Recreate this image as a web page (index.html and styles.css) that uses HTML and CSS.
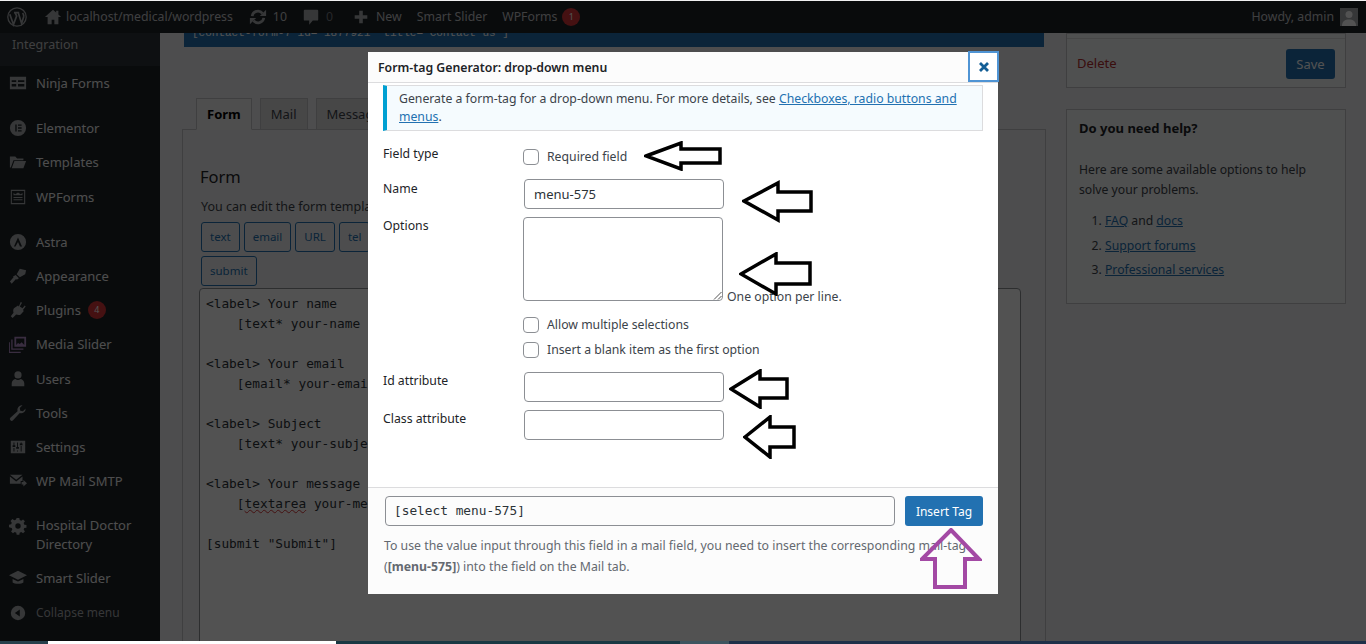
FILE: index.html
```html
<!DOCTYPE html>
<html lang="en">
<head>
  <meta charset="UTF-8">
  <title>Form-tag Generator</title>
  <link rel="stylesheet" href="styles.css">
</head>
<body>
  <div class="adminbar">
    <svg class="wp-logo" viewBox="0 0 20 20"><circle cx="10" cy="10" r="9.200" fill="none" stroke="#a7aaad" stroke-width="1.300"/><path d="M2.800 7.200L6.500 17.500 9.600 9 8 5.600M7 5.600h5.200M11.200 5.600L14.600 16.500l2-6.500c.5-1.800-.2-3-1-4" fill="none" stroke="#a7aaad" stroke-width="1.700"/></svg>
    <div class="bar-item home"><svg class="bar-icon" viewBox="0 0 20 20"><path d="M10 2L1 10h3v8h4.500v-5h3v5H16v-8h3l-3-2.700V3h-2.500v2z" fill="#a7aaad"/></svg>localhost/medical/wordpress</div>
    <div class="bar-item"><svg class="bar-icon" viewBox="0 0 20 20"><path d="M3.500 9A6.500 6.500 0 0 1 15 6" fill="none" stroke="#a7aaad" stroke-width="3"/><path d="M16.500 11A6.500 6.500 0 0 1 5 14" fill="none" stroke="#a7aaad" stroke-width="3"/><path d="M12 9l7 0 0-7zM8 11l-7 0 0 7z" fill="#a7aaad"/></svg>10</div>
    <div class="bar-item muted"><svg class="bar-icon" viewBox="0 0 20 20"><path d="M3 2h14a1 1 0 0 1 1 1v10a1 1 0 0 1-1 1h-5l-4 4.500V14H3a1 1 0 0 1-1-1V3a1 1 0 0 1 1-1z" fill="#a7aaad"/></svg>0</div>
    <div class="bar-item"><svg class="bar-icon" viewBox="0 0 20 20"><path d="M8 3h4v5h5v4h-5v5H8v-5H3V8h5z" fill="#a7aaad"/></svg>New</div>
    <div class="bar-item">Smart Slider</div>
    <div class="bar-item">WPForms<span class="bar-count">1</span></div>
    <div class="howdy">Howdy, admin<span class="avatar"><svg viewBox="0 0 18 18"><circle cx="9" cy="6.500" r="3.500" fill="#fff"/><path d="M2 18c0-5 3-6.500 7-6.500s7 1.500 7 6.500z" fill="#fff"/></svg></span></div>
  </div>

  <div class="wrap">
    <nav class="sidebar">
      <div class="menu-sub">Integration</div>
      <ul class="menu menu-ninja">
        <li><svg viewBox="0 0 20 20"><path d="M1 3h18v14H1zM3 7v2h5V7zm7 0v2h7V7zM3 11v3h5v-3zm7 0v3h7v-3z" fill="#a7aaad" fill-rule="evenodd"/></svg>Ninja Forms</li>
      </ul>
      <ul class="menu">
        <li><svg viewBox="0 0 20 20"><path d="M10 1a9 9 0 1 0 0 18 9 9 0 0 0 0-18zM7 6h1.500v8H7zm3 0h4v1.500h-4zm0 3.200h4v1.500h-4zm0 3.300h4V14h-4z" fill="#a7aaad" fill-rule="evenodd"/></svg>Elementor</li>
        <li><svg viewBox="0 0 20 20"><path d="M1 4h6l2 2h7v2H5l-3 8H1zM6 9h13l-3 8H3z" fill="#a7aaad"/></svg>Templates</li>
        <li><svg viewBox="0 0 20 20"><path d="M2 2h16v16H2zM3.200 3.200v13.600h13.600V3.200zM5 5.500l2 1.500 3-2 3 2 2-1.500V8H5zM5 10h10v1H5zm0 2.500h10v1H5z" fill="#a7aaad" fill-rule="evenodd"/></svg>WPForms</li>
      </ul>
      <ul class="menu">
        <li><svg viewBox="0 0 20 20"><path d="M10 1a9 9 0 1 0 0 18 9 9 0 0 0 0-18zM10 5l4.500 10h-2.300L10 10l-2.800 5H5.500z" fill="#a7aaad" fill-rule="evenodd"/></svg>Astra</li>
        <li><svg viewBox="0 0 20 20"><path d="M12 2l7 1.500L18 8l-6 3.500L8.500 8zM7.500 9l3.500 3.500-2 1.500-1.500-.5L3 18.500 1 16l4-4.500-.5-1z" fill="#a7aaad"/></svg>Appearance</li>
        <li><svg viewBox="0 0 20 20"><path d="M13 1l1.500 1-2.500 4 3 2 2.500-3L18.500 6l-3 4 1 1-3.500 4c-1.500 1-3.500.5-5 0L4 19l-2-2 3-4c-.5-2-.5-3.500.500-5l4.500-3 1 1z" fill="#a7aaad"/></svg>Plugins<span class="count">4</span></li>
        <li><svg viewBox="0 0 20 20"><path d="M6 2h13v11H6zM4 5v10h12v1.500H2.500V5zM1 8v10.500h12V20H0V8z" fill="#b08cc8" fill-rule="evenodd"/><path d="M8 4h9v7l-3-3-2 2-2-1-2 2z" fill="#1d2327"/></svg>Media Slider</li>
        <li><svg viewBox="0 0 20 20"><circle cx="10" cy="5.500" r="4" fill="#a7aaad"/><path d="M3 18v-3c0-3 2-4.500 4-5 2 1.500 4 1.500 6 0 2 .5 4 2 4 5v3z" fill="#a7aaad"/></svg>Users</li>
        <li><svg viewBox="0 0 20 20"><path d="M18.500 5a5 5 0 0 1-6.500 5l-7.500 8a2 2 0 0 1-3-2.800L9.500 8A5 5 0 0 1 15 1.500L12 4.500l.5 3 3 .5z" fill="#a7aaad"/></svg>Tools</li>
        <li><svg viewBox="0 0 20 20"><path d="M2 3h16v14H2zM5 5v3H4v2h3V8H6V5zm4 0v5H8v2h3v-2h-1V5zm4 0v1h-1v2h3V6h-1V5zM5 11v4h1v-4zm4 3v1h1v-1zm4-5v6h1V9z" fill="#a7aaad" fill-rule="evenodd"/></svg>Settings</li>
        <li><svg viewBox="0 0 20 20"><path d="M1 3h14l-7 5.500zM1 5l7 5.500L15 5v5h-2v3H1zM14 11h2V9l4 3.500-4 3.500v-2h-2z" fill="#a7aaad"/></svg>WP Mail SMTP</li>
      </ul>
      <ul class="menu">
        <li class="two-line"><svg viewBox="0 0 20 20"><path d="M8.500 1h3l.4 2.400 1.700.7 2-1.400 2.100 2.100-1.400 2 .7 1.700 2.400.4v3l-2.400.4-.7 1.700 1.400 2-2.100 2.100-2-1.400-1.700.7-.4 2.400h-3l-.4-2.400-1.700-.7-2 1.400-2.100-2.100 1.400-2-.7-1.700L0 11.500v-3l2.400-.4.7-1.700-1.400-2 2.100-2.100 2 1.400 1.700-.7zM10 7a3 3 0 1 0 0 6 3 3 0 0 0 0-6z" fill="#a7aaad" fill-rule="evenodd"/></svg>Hospital Doctor<br>Directory</li>
        <li><svg class="wide" viewBox="0 0 20 20"><path d="M10 2L0 7l10 5 10-5zM4 11l6 3 6-3v4c-2 2-10 2-12 0z" fill="#a7aaad"/></svg>Smart Slider</li>
        <li class="collapse"><svg viewBox="0 0 20 20"><path d="M10 2a8 8 0 1 0 0 16 8 8 0 0 0 0-16zm2 4v8L6.500 10z" fill="#a7aaad" fill-rule="evenodd"/></svg>Collapse menu</li>
      </ul>
    </nav>

    <main class="content">
      <div class="shortcode-bar">[contact-form-7 id="1877921" title="Contact us"]</div>
      <div class="columns">
        <div class="editor-col">
          <div class="tabs">
            <span class="tab active">Form</span>
            <span class="tab">Mail</span>
            <span class="tab">Messages</span>
            <span class="tab">Additional Settings</span>
          </div>
          <div class="tab-panel">
            <h2>Form</h2>
            <p class="tab-note">You can edit the form template here. For details, see Editing form template.</p>
            <div class="tag-buttons">
              <span class="tag-btn">text</span>
              <span class="tag-btn">email</span>
              <span class="tag-btn">URL</span>
              <span class="tag-btn">tel</span>
              <span class="tag-btn">number</span>
              <span class="tag-btn">date</span>
              <span class="tag-btn">text area</span>
              <span class="tag-btn">drop-down menu</span>
              <span class="tag-btn">checkboxes</span>
              <span class="tag-btn">radio buttons</span>
              <span class="tag-btn">acceptance</span>
              <span class="tag-btn break-btn">submit</span>
            </div>
            <pre class="form-code">&lt;label&gt; Your name
    [text* your-name autocomplete:name] &lt;/label&gt;

&lt;label&gt; Your email
    [email* your-email autocomplete:email] &lt;/label&gt;

&lt;label&gt; Subject
    [text* your-subject] &lt;/label&gt;

&lt;label&gt; Your message (optional)
    [<span class="squiggle">textarea</span> your-message] &lt;/label&gt;

[submit "Submit"]</pre>
          </div>
        </div>
        <aside class="side-col">
          <div class="side-box actions">
            <div class="actions-top"></div>
            <div class="actions-row">
              <span class="delete">Delete</span>
              <span class="save">Save</span>
            </div>
          </div>
          <div class="side-box help">
            <h3>Do you need help?</h3>
            <p>Here are some available options to help solve your problems.</p>
            <ol>
              <li><a>FAQ</a> and <a>docs</a></li>
              <li><a>Support forums</a></li>
              <li><a>Professional services</a></li>
            </ol>
          </div>
        </aside>
      </div>
    </main>
  </div>

  <div class="overlay"></div>

  <div class="foot-strip">
    <span class="strip s1"></span>
    <span class="strip s2"></span>
    <span class="strip s3"></span>
    <span class="strip s4"></span>
    <span class="strip s5"></span>
  </div>

  <div class="modal">
    <div class="modal-title">
      <span>Form-tag Generator: drop-down menu</span>
      <span class="modal-close"><svg viewBox="0 0 12 12"><path d="M2 2l8 8M10 2l-8 8" stroke="#135e96" stroke-width="2.800" fill="none"/></svg></span>
    </div>
    <div class="modal-body">
      <div class="notice">Generate a form-tag for a drop-down menu. For more details, see <a>Checkboxes, radio buttons and menus</a>.</div>
      <div class="row row-type">
        <div class="row-label">Field type</div>
        <label class="check"><span class="box"></span>Required field</label>
      </div>
      <div class="row row-name">
        <div class="row-label">Name</div>
        <div class="field">menu-575</div>
      </div>
      <div class="row row-options">
        <div class="row-label">Options</div>
        <div class="options-cell">
          <div class="options-line">
            <div class="area"><svg viewBox="0 0 9 9"><path d="M8.500 1L1 8.500M8.500 5L5 8.500" stroke="#555" fill="none"/></svg></div>
            <span class="hint">One option per line.</span>
          </div>
          <label class="check check-multi"><span class="box"></span>Allow multiple selections</label>
          <label class="check check-blank"><span class="box"></span>Insert a blank item as the first option</label>
        </div>
      </div>
      <div class="row row-id">
        <div class="row-label">Id attribute</div>
        <div class="field"></div>
      </div>
      <div class="row row-class">
        <div class="row-label">Class attribute</div>
        <div class="field"></div>
      </div>
    </div>
    <div class="modal-foot">
      <div class="tag-line">
        <div class="tag-output">[select menu-575]</div>
        <span class="insert">Insert Tag</span>
      </div>
      <p class="foot-note">To use the value input through this field in a mail field, you need to insert the corresponding mail-tag (<b>[menu-575]</b>) into the field on the Mail tab.</p>
    </div>
  </div>

  <!-- arrows someone drew on top of the screenshot -->
  <svg class="arrow a1" viewBox="0 0 78 30"><path d="M2 15L37 2v6h39v14H37v6z"/></svg>
  <svg class="arrow a2" viewBox="0 0 72 44"><path d="M2 21L36 3v9h33v19H36v9z"/></svg>
  <svg class="arrow a3" viewBox="0 0 73 44"><path d="M2 22L37 2v9h34v21H37v10z"/></svg>
  <svg class="arrow a4" viewBox="0 0 60 40"><path d="M2 20L31 2v8h27v19H31v9z"/></svg>
  <svg class="arrow a5" viewBox="0 0 53 44"><path d="M2 22L27 2v10h24v20H27v10z"/></svg>
  <svg class="arrow up" viewBox="0 0 62 62"><path d="M31 2l28 29H45v28H15V31H2z"/></svg>
</body>
</html>
```

FILE: styles.css
```css
body {
  margin: 0;
  height: 644px;
  overflow: hidden;
  position: relative;
  font-family: "Noto Sans", "Open Sans", sans-serif;
  font-size: 13px;
  line-height: 1.4;
  color: #3c434a;
  background: #f0f0f1;
}

a {
  color: #2271b1;
  text-decoration: underline;
}

/* admin bar */
.adminbar {
  height: 32px;
  margin-top: 1px;
  background: #1d2327;
  color: #c3c4c7;
  display: flex;
  align-items: center;
  font-size: 12.300px;
  padding-left: 7px;
}

.wp-logo {
  width: 20px;
  height: 20px;
  margin-right: 17px;
}

.bar-item {
  display: flex;
  align-items: center;
  margin-right: 15px;
}

.bar-icon {
  width: 18px;
  height: 18px;
  margin-right: 6px;
}

.bar-item.home {
  margin-right: 16px;
}

.home .bar-icon {
  margin-right: 4px;
}

.bar-item.muted {
  color: #787c82;
  margin-right: 19px;
}

.bar-count {
  display: inline-block;
  width: 18px;
  height: 18px;
  margin-left: 5px;
  border-radius: 50%;
  background: #d63638;
  color: #fff;
  font-size: 9px;
  line-height: 18px;
  text-align: center;
}

.howdy {
  margin-left: auto;
  display: flex;
  align-items: center;
  margin-right: 8px;
}

.avatar {
  width: 18px;
  height: 18px;
  margin-left: 6px;
  background: #a7aaad;
  display: block;
}

.avatar svg {
  display: block;
  width: 18px;
  height: 18px;
}

/* left menu */
.wrap {
  display: flex;
  height: 611px;
  overflow: hidden;
}

.sidebar {
  width: 160px;
  flex: none;
  background: #1d2327;
  color: #f0f0f1;
}

.menu-sub {
  height: 33px;
  line-height: 24px;
  padding-left: 12px;
  background: #2c3338;
  color: #c3c4c7;
  font-size: 12.500px;
}

.menu {
  list-style: none;
  margin: 0 0 11px;
  padding: 0;
}

.menu li {
  display: flex;
  align-items: center;
  position: relative;
  min-height: 34.200px;
  padding-left: 36px;
  box-sizing: border-box;
}

.menu svg {
  position: absolute;
  left: 9px;
  top: 8px;
  width: 18px;
  height: 18px;
}

.menu svg.wide {
  left: 7px;
  width: 22px;
}

.menu .two-line {
  min-height: 52px;
  line-height: 19px;
  display: block;
  padding-top: 7px;
}

.count {
  display: inline-block;
  width: 18px;
  height: 18px;
  margin-left: 7px;
  border-radius: 50%;
  background: #d63638;
  color: #fff;
  font-size: 9px;
  line-height: 18px;
  text-align: center;
}

.menu .collapse {
  color: #a7aaad;
  font-size: 12px;
  margin-top: 1px;
}

/* page behind the dialog */
.content {
  flex: 1;
  min-width: 0;
}

.shortcode-bar {
  width: 860px;
  margin-left: 24px;
  height: 14px;
  box-sizing: border-box;
  background: #2271b1;
  color: #fff;
  font-family: "Liberation Mono", monospace;
  font-size: 11px;
  line-height: 1px;
  padding-left: 8px;
  overflow: hidden;
  white-space: nowrap;
}

.columns {
  display: flex;
  padding-left: 22px;
}

.editor-col {
  width: 864px;
  padding-top: 51px;
  flex: none;
}

.tabs {
  display: flex;
  gap: 8px;
  padding-left: 14px;
  margin-bottom: -1px;
  height: 32px;
}

.tab {
  border: 1px solid #c3c4c7;
  background: #dcdcde;
  padding: 0 10px;
  line-height: 30px;
  font-size: 13px;
  white-space: nowrap;
}

.tab.active {
  background: #f1f1f1;
  border-bottom-color: #f1f1f1;
  font-weight: 700;
  color: #000;
}

.tab-panel {
  border: 1px solid #c3c4c7;
  padding: 0 16px 0 18px;
  height: 600px;
  box-sizing: border-box;
}

.tab-panel h2 {
  margin: 37px 0 0 -1px;
  font-size: 16.500px;
  font-weight: 400;
  color: #1d2327;
  line-height: 1.2;
}

.tab-note {
  margin: 11px 0 7px;
  font-size: 12.500px;
}

.tag-buttons {
  display: flex;
  flex-wrap: wrap;
  gap: 4px;
}

.tag-btn {
  border: 1px solid #2271b1;
  border-radius: 3px;
  color: #2271b1;
  font-size: 11.500px;
  height: 30px;
  line-height: 28px;
  padding: 0 8px;
  box-sizing: border-box;
  white-space: nowrap;
}

.break-btn {
  margin-right: 400px;
}

.form-code {
  margin: 2px 0 0 -2px;
  border: 1px solid #8c8f94;
  border-radius: 4px;
  padding: 5px 6px;
  font-family: "DejaVu Sans Mono", monospace;
  font-size: 12.800px;
  line-height: 20px;
  height: 500px;
  box-sizing: border-box;
  background: #fff;
  color: #2c3338;
  width: 822px;
}

.squiggle {
  text-decoration: underline wavy #d63638 1px;
}

.side-col {
  margin-left: 20px;
  margin-top: -14px;
  width: 280px;
}

.side-box {
  border: 1px solid #c3c4c7;
  background: #f6f7f7;
  box-sizing: border-box;
}

.actions {
  height: 55px;
}

.actions-top {
  height: 4px;
  border-bottom: 1px solid #dcdcde;
}

.actions-row {
  height: 49px;
  display: flex;
  align-items: center;
  justify-content: space-between;
  padding: 0 10px;
}

.delete {
  color: #b32d2e;
}

.save {
  width: 49px;
  height: 30px;
  line-height: 30px;
  border-radius: 3px;
  background: #2271b1;
  color: #fff;
  text-align: center;
}

.help {
  margin-top: 21px;
  height: 195px;
  padding: 8px 12px;
  font-size: 12.200px;
}

.help h3 {
  margin: 0;
  font-size: 13px;
  line-height: 20px;
  color: #1d2327;
}

.help p {
  margin: 22px 0 0;
  line-height: 20px;
}

.help ol {
  margin: 11px 0 0;
  padding-left: 26px;
}

.help li {
  line-height: 20px;
  margin-bottom: 4.500px;
}

.foot-strip {
  position: absolute;
  left: 0;
  right: 0;
  bottom: 0;
  height: 3px;
  display: flex;
}

.strip {
  display: block;
}

.s1 {
  width: 48px;
  background: #26404c;
}

.s2 {
  width: 288px;
  background: #fff;
}

.s3 {
  width: 344px;
  background: #193843;
}

.s4 {
  width: 49px;
  background: #3e5560;
}

.s5 {
  flex: 1;
  background: #1e3049;
}

/* dialog */
.overlay {
  position: absolute;
  inset: 1px 0 0;
  background: #000;
  opacity: .68;
}

.modal {
  position: absolute;
  left: 368px;
  top: 52px;
  width: 630px;
  height: 542px;
  background: #fff;
  display: flex;
  flex-direction: column;
}

.modal-title {
  height: 29px;
  background: #fcfcfc;
  border-bottom: 1px solid #dcdcde;
  flex: none;
  display: flex;
  align-items: center;
  padding: 1px 0 0 10px;
  font-size: 12.300px;
  font-weight: 600;
  color: #1d2327;
}

.modal-close {
  position: absolute;
  right: -1px;
  top: -1px;
  width: 31px;
  height: 31px;
  box-sizing: border-box;
  border: 2px solid #4f94d4;
  background: #fff;
  display: flex;
  align-items: center;
  justify-content: center;
}

.modal-close svg {
  width: 12px;
  height: 12px;
}

.modal-body {
  flex: 1;
  padding: 2px 15px 0;
}

.notice {
  border: 1px solid #dcdcde;
  border-left: 4px solid #00a0d2;
  background: #f5fbfe;
  padding: 4px 12px 0;
  height: 46px;
  line-height: 18px;
  box-sizing: border-box;
  font-size: 12.250px;
}

.row {
  display: flex;
}

.row-label {
  width: 141px;
  flex: none;
  color: #1d2327;
  font-size: 12.250px;
}

.row-type {
  margin-top: 14px;
}

.row-type .check {
  margin-top: 4px;
  margin-left: -1px;
}

.row-name {
  margin-top: 14px;
}

.row-name .row-label {
  padding-top: 1px;
}

.row-options {
  margin-top: 8px;
}

.options-cell {
  margin-left: -1px;
}

.row-id {
  margin-top: 14px;
}

.row-class {
  margin-top: 8px;
}

.check {
  display: flex;
  align-items: center;
  color: #3c434a;
  font-size: 12.250px;
  height: 16px;
  margin-top: 2px;
}

.box {
  width: 16px;
  height: 16px;
  border: 1px solid #8c8f94;
  border-radius: 4px;
  box-sizing: border-box;
  margin-right: 8px;
  background: #fff;
}

.field {
  width: 200px;
  height: 30px;
  border: 1px solid #8c8f94;
  border-radius: 4px;
  box-sizing: border-box;
  padding: 0 9px;
  line-height: 28px;
  color: #2c3338;
}

.options-line {
  display: flex;
  align-items: flex-end;
}

.area {
  width: 200px;
  height: 84px;
  border: 1px solid #8c8f94;
  border-radius: 4px;
  box-sizing: border-box;
  position: relative;
}

.area svg {
  position: absolute;
  right: 0;
  bottom: 0;
  width: 9px;
  height: 9px;
}

.hint {
  margin: 0 0 -4px 4px;
  font-size: 12.250px;
  line-height: 16px;
}

.check-multi {
  margin-top: 16px;
}

.check-blank {
  margin-top: 9px;
}

.modal-foot {
  flex: none;
  height: 107px;
  box-sizing: border-box;
  background: #fcfcfc;
  border-top: 1px solid #dcdcde;
  padding: 8px 15px 0 17px;
}

.tag-line {
  display: flex;
  justify-content: space-between;
}

.tag-output {
  width: 510px;
  height: 30px;
  border: 1px solid #8c8f94;
  border-radius: 4px;
  box-sizing: border-box;
  padding-left: 8px;
  font-family: "DejaVu Sans Mono", monospace;
  font-size: 12.800px;
  line-height: 27px;
  color: #2c3338;
}

.insert {
  width: 78px;
  height: 30px;
  border-radius: 3px;
  background: #2271b1;
  color: #fff;
  text-align: center;
  line-height: 31px;
  font-size: 12px;
}

.foot-note {
  margin: 9px 0 0 -1px;
  line-height: 21px;
  font-size: 12.300px;
  color: #646970;
}

/* arrows */
.arrow {
  position: absolute;
  fill: none;
  stroke: #000;
  stroke-width: 3.500;
}

.a1 {
  left: 644px;
  top: 141px;
  width: 78px;
  height: 30px;
}

.a2 {
  left: 742px;
  top: 180px;
  width: 72px;
  height: 44px;
}

.a3 {
  left: 739px;
  top: 252px;
  width: 73px;
  height: 44px;
}

.a4 {
  left: 729px;
  top: 369px;
  width: 60px;
  height: 40px;
}

.a5 {
  left: 743px;
  top: 415px;
  width: 53px;
  height: 44px;
}

.up {
  left: 920px;
  top: 528px;
  width: 62px;
  height: 62px;
  stroke: #a349a4;
  stroke-width: 4;
}
```
